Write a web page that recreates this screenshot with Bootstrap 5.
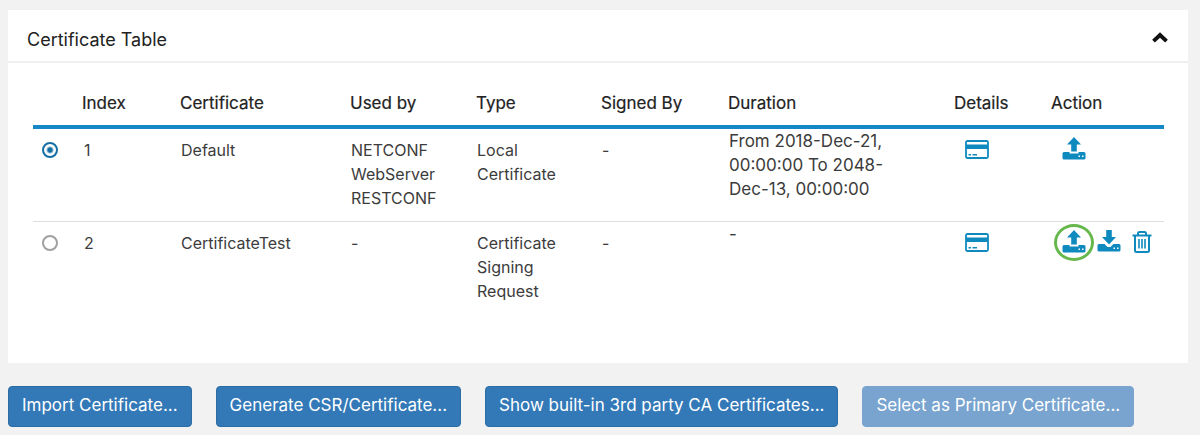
<!DOCTYPE html>
<html lang="en">
<head>
<meta charset="utf-8">
<meta name="viewport" content="width=device-width, initial-scale=1">
<title>Certificate Table</title>
<link href="https://cdn.jsdelivr.net/npm/bootstrap@5.3.0/dist/css/bootstrap.min.css" rel="stylesheet">
<style>
  body { background: #f2f2f2; color: #3c3c3c; font-family: Inter, "Liberation Sans", sans-serif; font-size: 16px; line-height: 24px; }
  .page { padding: 10px 12px 8px 8px; }
  .panel { background: #fff; border: 0; border-radius: 0; color: inherit; }
  .panel-head { padding: 18px 19px 9px 19px; border-bottom: 2px solid #f0f0f0; color: #222; }
  .panel-head h1 { font-size: 18px; line-height: 24px; font-weight: 400; }
  .panel-body { padding: 17px 24px 48px 25px; }
  .cert-table { table-layout: fixed; min-width: 1080px; color: inherit; }
  .cert-table th { padding: 11px 0 10px; font-size: 17px; font-weight: 400; color: #222; -webkit-text-stroke: .2px #222; border-bottom: 4px solid #1488c6; }
  .cert-table td { padding: 9px 0 11px 1px; border-bottom: 1px solid #dedede; vertical-align: top; }
  .cert-table tbody tr:last-child td { border-bottom-color: transparent; }
  .cert-table td.duration { padding: 0 56px 0 1px; font-size: 17px; }
  .cert-table td.pick { padding-left: 9px; }
  .cert-table td.index { padding-left: 2px; }
  .cert-table td.details { padding-top: 11px; padding-left: 11px; }
  .cert-table td.actions { padding-top: 8px; padding-left: 11px; }
  .c-pick { width: 49px; } .c-index { width: 98px; } .c-cert { width: 170px; } .c-used { width: 126px; }
  .c-type { width: 125px; } .c-signed { width: 127px; } .c-details { width: 97px; } .c-action { width: 113px; }
  .pick input { appearance: none; display: block; width: 16px; height: 16px; margin: 4px 0; border: 2px solid #a0a0a0; border-radius: 50%; background: #fff; }
  .pick input:checked { border-color: #156fa3; background: radial-gradient(circle, #156fa3 0 2px, #fff 4px); }
  .icon-btn { display: block; padding: 0; border: 0; background: none; color: #0e8abf; line-height: 0; }
  .icon-btn svg { display: block; }
  .actions .tools { gap: 11px; height: 24px; }
  .ringed { position: relative; }
  .ringed::after { content: ""; position: absolute; inset: -6px -8px -8px -8px; border: 3px solid #66b84c; border-radius: 50%; }
  .btn-bar { gap: 24px; padding-top: 23px; }
  .btn-cert { --bs-btn-color: #fff; --bs-btn-bg: #3379b7; --bs-btn-border-color: #2e6da4; --bs-btn-hover-color: #fff; --bs-btn-hover-bg: #286090; --bs-btn-disabled-color: #fff; --bs-btn-disabled-bg: #78a4cf; --bs-btn-disabled-border-color: #78a4cf; --bs-btn-disabled-opacity: 1; --bs-btn-border-radius: 4px; font-size: 17px; line-height: 24px; padding: 6px 13px 9px; }
</style>
</head>
<body>
<svg width="0" height="0" class="position-absolute" aria-hidden="true">
  <symbol id="i-card" viewBox="0 0 24 19">
    <rect x="1" y="1" width="22" height="17" rx="1.5" fill="none" stroke="currentColor" stroke-width="1.8"/>
    <path fill="currentColor" d="M1 4.500h22v4.500H1zM3.500 14h2.500v1.500H3.500zM7.500 14h4.500v1.500H7.500z"/>
  </symbol>
  <symbol id="i-up" viewBox="0 0 24 23">
    <path fill="currentColor" d="M12 0l7 7.500h-4.200V14.500H9.200V7.500H5zM2 15h5.500v1.500h9V15H22q1.500 0 1.500 1.500v4.500q0 1.500-1.500 1.500H2Q.5 22.500.5 21v-4.500Q.5 15 2 15zm14.500 3.500v1.500H18v-1.500zm3.500 0v1.500h1.500v-1.500z"/>
  </symbol>
  <symbol id="i-down" viewBox="0 0 24 23">
    <path fill="currentColor" d="M9.200 0h5.600v7H19l-7 7.500L5 7h4.200zM2 14h5.500l3 3h3l3-3H22q1.500 0 1.500 1.500v4.500q0 1.500-1.500 1.500H2Q.5 21.500.5 20v-4.500Q.5 14 2 14zm14.500 3.500V19H18v-1.500zm3.500 0V19h1.500v-1.500z"/>
  </symbol>
  <symbol id="i-trash" viewBox="0 0 20 23">
    <path fill="none" stroke="currentColor" stroke-width="2" d="M.5 5.500h19M6 5V3.500Q6 2 7.500 2h5Q14 2 14 3.500V5M3 6v14.500q0 1.500 1.500 1.500h11q1.500 0 1.500-1.500V6"/>
    <path fill="none" stroke="currentColor" stroke-width="1.600" d="M7 9v9.500M10 9v9.500M13 9v9.500"/>
  </symbol>
</svg>

<main class="page container-fluid">
  <section class="panel card">
    <header class="panel-head d-flex justify-content-between align-items-center">
      <h1 class="m-0">Certificate Table</h1>
      <button type="button" class="icon-btn text-black" aria-label="Collapse">
        <svg width="18" height="16" viewBox="0 0 18 16"><path d="M2.500 9.200L9 3l6.500 6.200" fill="none" stroke="#111" stroke-width="3.900"/></svg>
      </button>
    </header>
    <div class="panel-body overflow-auto">
      <table class="cert-table w-100">
        <colgroup><col class="c-pick"><col class="c-index"><col class="c-cert"><col class="c-used"><col class="c-type"><col class="c-signed"><col><col class="c-details"><col class="c-action"></colgroup>
        <thead>
          <tr><th></th><th>Index</th><th>Certificate</th><th>Used by</th><th>Type</th><th>Signed By</th><th>Duration</th><th>Details</th><th>Action</th></tr>
        </thead>
        <tbody>
          <tr>
            <td class="pick"><input type="radio" name="cert" aria-label="Default" checked></td>
            <td class="index">1</td><td>Default</td><td>NETCONF<br>WebServer<br>RESTCONF</td><td>Local<br>Certificate</td><td>-</td>
            <td class="duration">From 2018-Dec-21, 00:00:00 To 2048-Dec-13, 00:00:00</td>
            <td class="details"><button type="button" class="icon-btn" aria-label="Details of Default"><svg width="24" height="19"><use href="#i-card"/></svg></button></td>
            <td class="actions"><div class="tools d-flex align-items-start">
              <button type="button" class="icon-btn" aria-label="Upload Default"><svg width="24" height="23"><use href="#i-up"/></svg></button>
            </div></td>
          </tr>
          <tr>
            <td class="pick"><input type="radio" name="cert" aria-label="CertificateTest"></td>
            <td class="index">2</td><td>CertificateTest</td><td>-</td><td>Certificate<br>Signing<br>Request</td><td>-</td>
            <td class="duration">-</td>
            <td class="details"><button type="button" class="icon-btn" aria-label="Details of CertificateTest"><svg width="24" height="19"><use href="#i-card"/></svg></button></td>
            <td class="actions"><div class="tools d-flex align-items-start">
              <button type="button" class="icon-btn ringed" aria-label="Upload CertificateTest"><svg width="24" height="23"><use href="#i-up"/></svg></button>
              <button type="button" class="icon-btn" aria-label="Download CertificateTest"><svg width="24" height="23"><use href="#i-down"/></svg></button>
              <button type="button" class="icon-btn" aria-label="Delete CertificateTest"><svg width="20" height="23"><use href="#i-trash"/></svg></button>
            </div></td>
          </tr>
        </tbody>
      </table>
    </div>
  </section>
  <div class="btn-bar d-flex flex-wrap">
    <button type="button" class="btn btn-cert">Import Certificate...</button>
    <button type="button" class="btn btn-cert">Generate CSR/Certificate...</button>
    <button type="button" class="btn btn-cert">Show built-in 3rd party CA Certificates...</button>
    <button type="button" class="btn btn-cert" disabled>Select as Primary Certificate...</button>
  </div>
</main>
<script src="https://cdn.jsdelivr.net/npm/bootstrap@5.3.0/dist/js/bootstrap.bundle.min.js"></script>
</body>
</html>
